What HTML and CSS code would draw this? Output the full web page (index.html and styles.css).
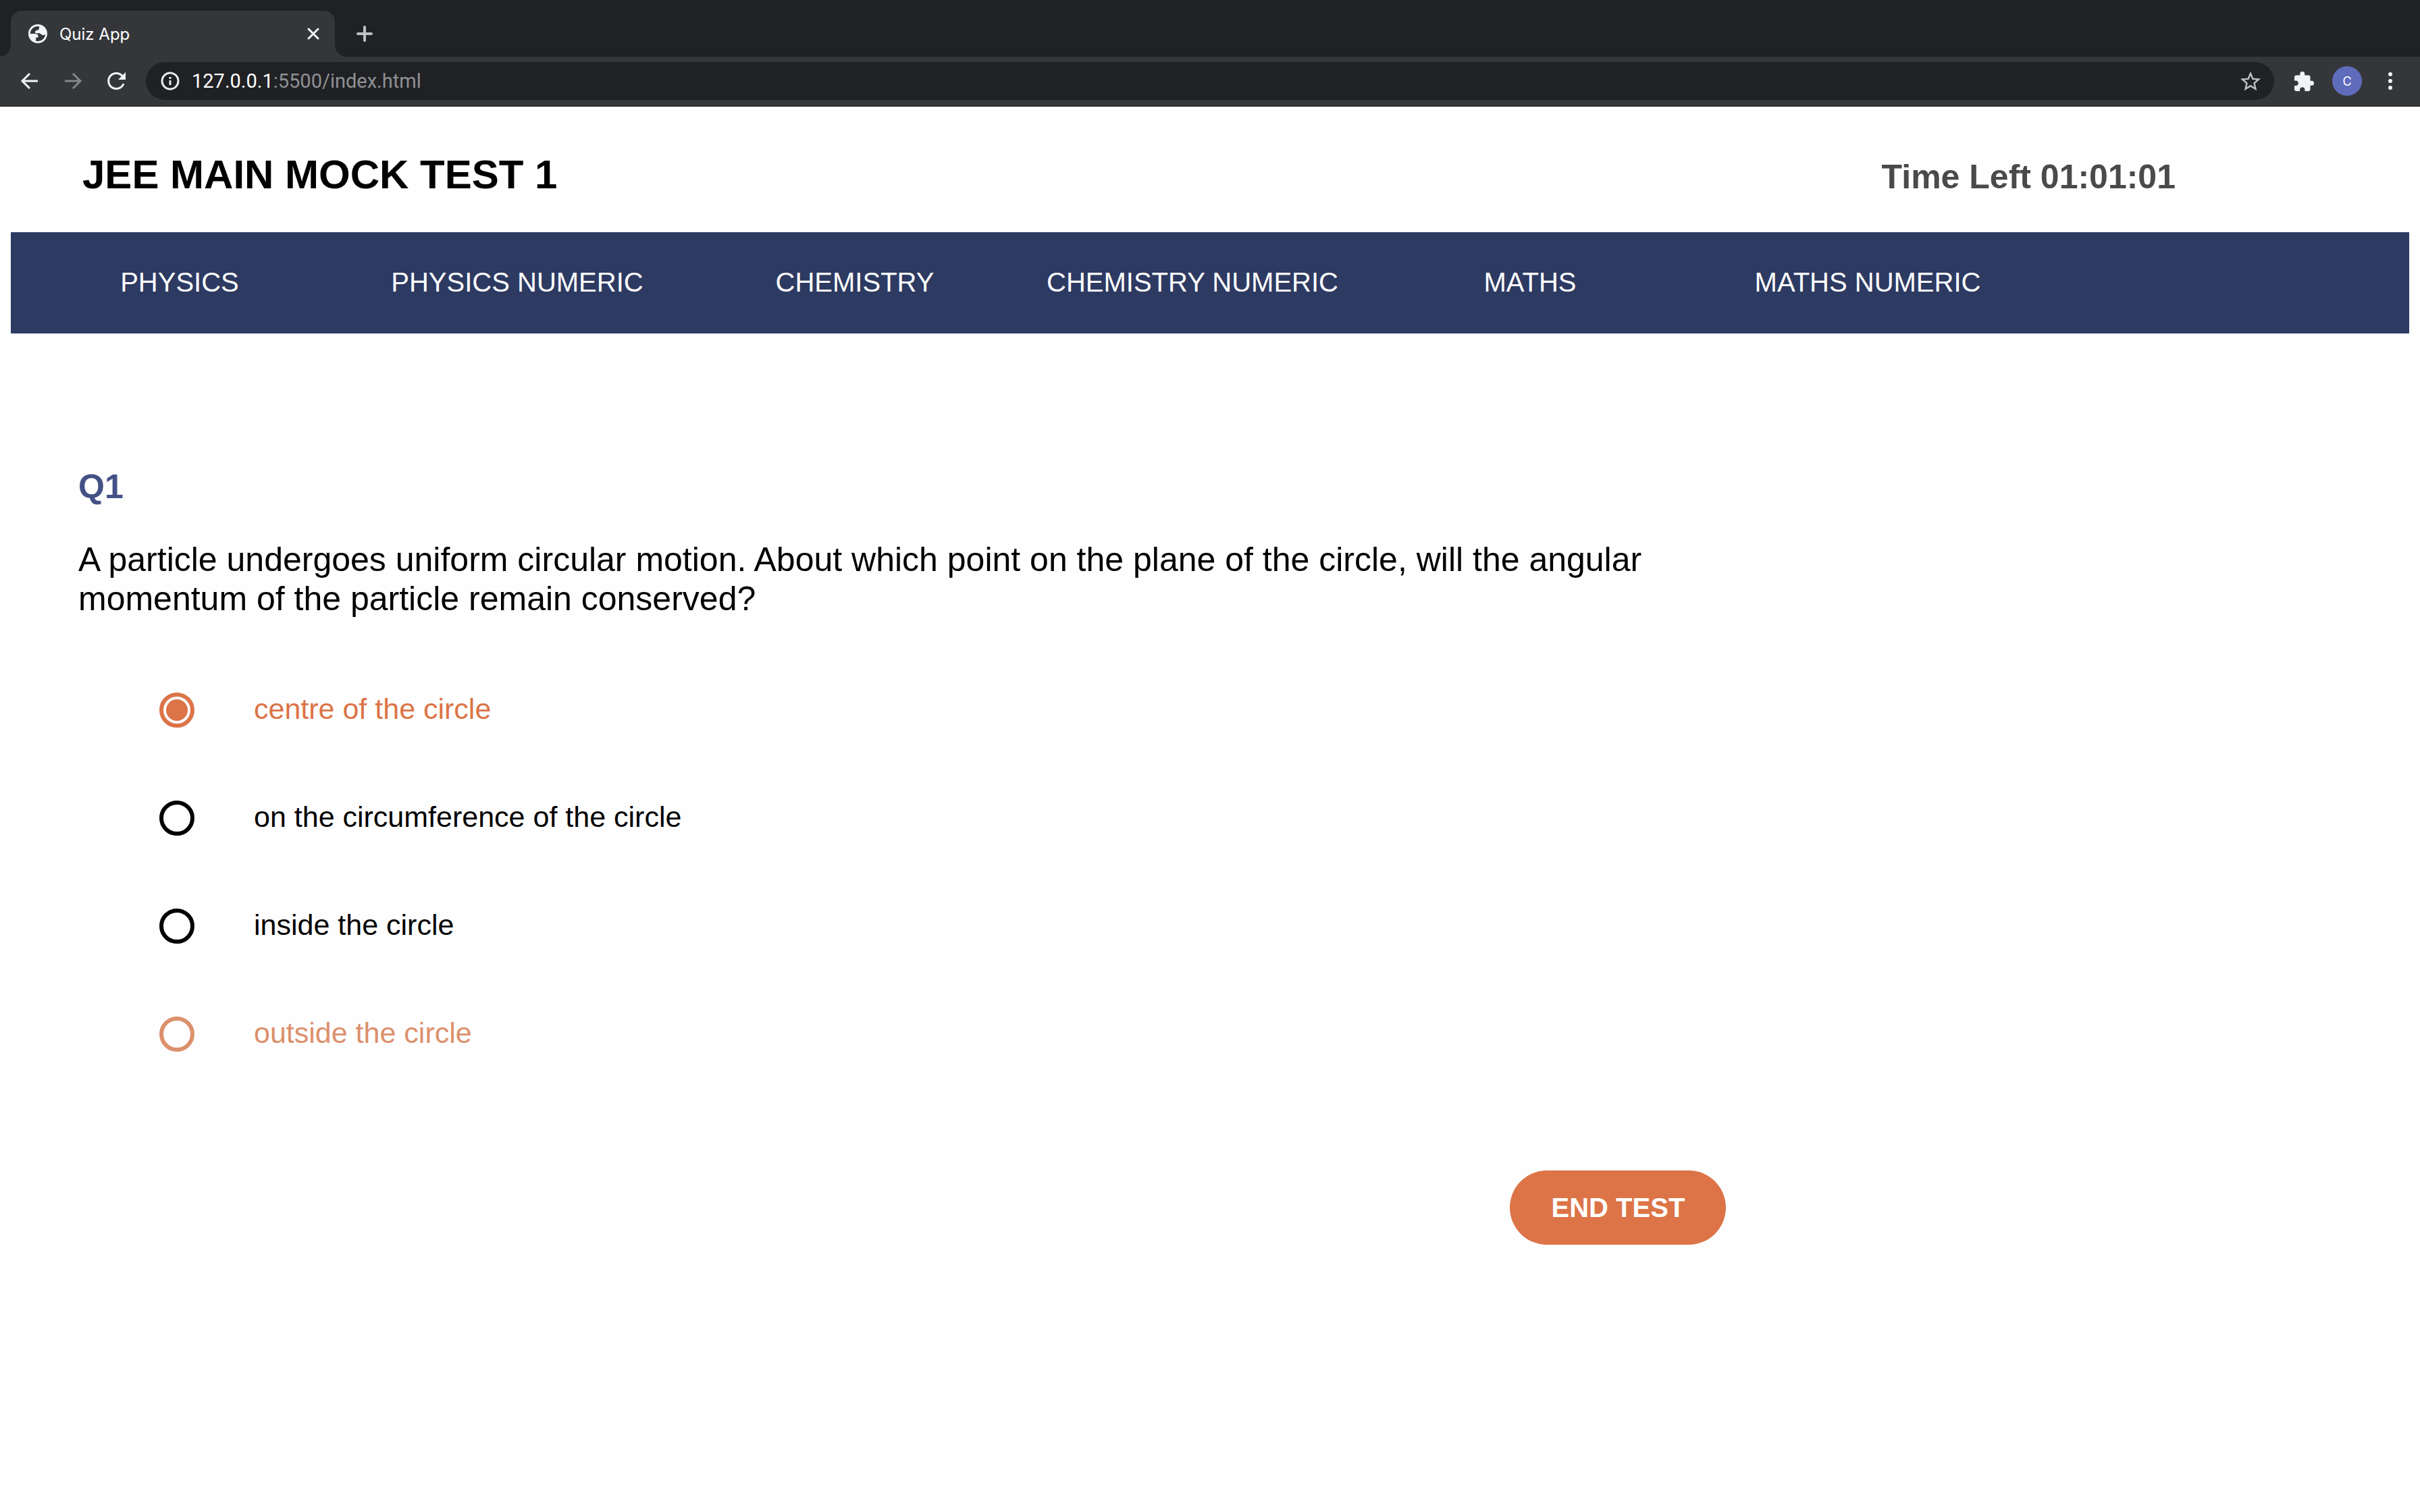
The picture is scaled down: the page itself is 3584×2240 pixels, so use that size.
FILE: index.html
```html
<!DOCTYPE html>
<html lang="en">
<head>
<meta charset="utf-8">
<title>Quiz App</title>
<link rel="stylesheet" href="styles.css">
</head>
<body>
<div class="browser">
  <div class="tab-strip">
    <div class="tab">
      <svg class="tab-icon" viewBox="2 2 20 20" aria-hidden="true"><circle cx="12" cy="12" r="10" fill="#f1f3f4"/><path fill="#35363a" d="M13.500 4.300C8.500 3.500 4 7 4 12h5c2.300 0 3.500 1 3.500 2.800 0 .8-.3 1.200-1 1.200H10v3.700c5 1 9.500-2.200 10-7-.8.8-2.600 1-3.600.6-1.200-.5-1.400-1.600-2.400-1.800H9.500c-.8-1.500 0-3 1.800-3.200 1.500-.2 2.200-1.200 2.200-4z"/></svg>
      <span class="tab-title">Quiz App</span>
      <button class="icon-button" aria-label="Close tab"><svg class="icon-close" viewBox="0 0 18 18"><path d="M2 2l14 14M16 2L2 16"/></svg></button>
    </div>
    <button class="icon-button new-tab" aria-label="New tab"><svg class="icon-plus" viewBox="0 0 24 24"><path d="M12 2v20M2 12h20"/></svg></button>
  </div>
  <div class="toolbar">
    <button class="icon-button" aria-label="Back"><svg class="icon-nav" viewBox="0 0 32 32"><path d="M28 16H6M16 5L5 16l11 11"/></svg></button>
    <button class="icon-button is-disabled" aria-label="Forward" disabled><svg class="icon-nav" viewBox="0 0 32 32"><path d="M4 16h22M16 5l11 11-11 11"/></svg></button>
    <button class="icon-button" aria-label="Reload"><svg class="icon-nav" viewBox="0 0 32 32"><path d="M27 20A11.500 11.500 0 1 1 25 8.500"/><path class="solid" d="M30 3v11H19z"/></svg></button>
    <div class="address-bar">
      <svg class="icon-info" viewBox="0 0 28 28" aria-hidden="true"><circle cx="14" cy="14" r="12"/><path d="M14 13v7M14 8v3"/></svg>
      <div class="address" role="textbox" aria-label="Address" contenteditable="true" spellcheck="false">127.0.0.1<span class="address-path">:5500/index.html</span></div>
      <button class="icon-button" aria-label="Bookmark this tab"><svg class="icon-star" viewBox="2 2 20 19"><path d="M22 9.240l-7.190-.62L12 2 9.190 8.630 2 9.240l5.460 4.730L5.820 21 12 17.270 18.180 21l-1.630-7.030L22 9.240zM12 15.400l-3.760 2.270 1-4.280-3.320-2.880 4.380-.38L12 6.100l1.710 4.040 4.380.38-3.320 2.880 1 4.280L12 15.400z"/></svg></button>
    </div>
    <button class="icon-button" aria-label="Extensions"><svg class="icon-puzzle" viewBox="2 1 21 21"><path d="M20.500 11H19V7c0-1.100-.9-2-2-2h-4V3.500a2.500 2.500 0 0 0-5 0V5H4c-1.100 0-1.990.9-1.990 2v3.800H3.500c1.490 0 2.700 1.210 2.700 2.700s-1.210 2.700-2.700 2.700H2V20c0 1.100.9 2 2 2h3.800v-1.500c0-1.490 1.210-2.700 2.700-2.700s2.700 1.210 2.700 2.700V22H17c1.100 0 2-.9 2-2v-4h1.500a2.500 2.500 0 0 0 0-5z"/></svg></button>
    <button class="avatar" aria-label="Profile">C</button>
    <button class="icon-button" aria-label="Menu"><svg class="icon-menu" viewBox="0 0 6 26"><circle cx="3" cy="3" r="3"/><circle cx="3" cy="13" r="3"/><circle cx="3" cy="23" r="3"/></svg></button>
  </div>
</div>

<div class="page">
  <header class="header">
    <h1 class="title">JEE MAIN MOCK TEST 1</h1>
    <p class="timer">Time Left 01:01:01</p>
  </header>
  <nav class="subjects">
    <a class="subject" href="#physics">PHYSICS</a>
    <a class="subject" href="#physics-numeric">PHYSICS NUMERIC</a>
    <a class="subject" href="#chemistry">CHEMISTRY</a>
    <a class="subject" href="#chemistry-numeric">CHEMISTRY NUMERIC</a>
    <a class="subject" href="#maths">MATHS</a>
    <a class="subject" href="#maths-numeric">MATHS NUMERIC</a>
  </nav>
  <main class="quiz">
    <h2 class="number">Q1</h2>
    <p class="question" id="question">A particle undergoes uniform circular motion. About which point on the plane of the circle, will the angular momentum of the particle remain conserved?</p>
    <div class="options" role="radiogroup" aria-labelledby="question">
      <label class="option"><input class="radio" type="radio" name="answer" checked><span>centre of the circle</span></label>
      <label class="option"><input class="radio" type="radio" name="answer"><span>on the circumference of the circle</span></label>
      <label class="option"><input class="radio" type="radio" name="answer"><span>inside the circle</span></label>
      <label class="option is-hovered"><input class="radio" type="radio" name="answer"><span>outside the circle</span></label>
    </div>
    <div class="actions">
      <button class="end-test">END TEST</button>
    </div>
  </main>
</div>
</body>
</html>
```

FILE: styles.css
```css
* { box-sizing: border-box; }

body {
  margin: 0;
  background: #fefefe;
  color: #000;
  font-family: "Liberation Sans", Arial, Helvetica, sans-serif;
}

h1, h2, p { margin: 0; }

button {
  border: 0;
  padding: 0;
  background: none;
  font-family: inherit;
}

svg { display: block; }

/* Browser window frame */
.browser {
  background: #35363a;
  border-bottom: 2px solid #27282b;
  color: #fff;
  font-family: Inter, Roboto, sans-serif;
}

.tab-strip {
  display: flex;
  height: 84px;
  padding: 16px 16px 0;
  background: #202124;
}

.tab {
  position: relative;
  display: flex;
  align-items: center;
  gap: 18px;
  width: 480px;
  padding: 0 23px 0 26px;
  border-radius: 16px 16px 0 0;
  background: #35363a;
}

/* Flared feet of the active tab */
.tab::before,
.tab::after {
  content: "";
  position: absolute;
  bottom: 0;
  width: 16px;
  height: 16px;
}

.tab::before {
  right: 100%;
  background: radial-gradient(circle at 0 0, #202124 15px, #35363a 16px);
}

.tab::after {
  left: 100%;
  background: radial-gradient(circle at 100% 0, #202124 15px, #35363a 16px);
}

.tab-icon { width: 28px; height: 28px; }

.tab-title {
  flex: 1;
  font-size: 24px;
}

.icon-button {
  display: flex;
  color: #f1f3f4;
  fill: none;
  stroke: currentColor;
  stroke-width: 3;
}

.icon-button.is-disabled { color: #85868a; }

.icon-close { width: 18px; height: 18px; stroke-linecap: round; }

.new-tab {
  align-items: center;
  margin-left: 32px;
  color: #bdc1c6;
  stroke-width: 4;
}

.icon-plus { width: 24px; height: 24px; stroke-linecap: round; }

.toolbar {
  display: flex;
  align-items: center;
  gap: 32px;
  height: 72px;
  padding: 0 41px 0 28px;
}

.icon-nav { width: 32px; height: 32px; }

.solid { fill: currentColor; stroke: none; }

.address-bar {
  flex: 1;
  display: flex;
  align-items: center;
  gap: 18px;
  height: 56px;
  margin-right: -2px;
  margin-left: -4px;
  padding: 0 20px 0 22px;
  border-radius: 28px;
  background: #202124;
}

.address-bar .icon-button { color: #bdc1c6; }

.icon-info {
  width: 28px;
  height: 28px;
  fill: none;
  stroke: #e8eaed;
  stroke-width: 3;
}

.address {
  flex: 1;
  font-family: Roboto, sans-serif;
  font-size: 29px;
}

.address-path { color: #8f9194; }

.icon-star { width: 30px; height: 30px; fill: currentColor; stroke: none; }

.icon-puzzle { width: 29px; height: 29px; fill: currentColor; stroke: none; }

.avatar {
  width: 44px;
  height: 44px;
  margin: 0 7px 0 -5px;
  border-radius: 50%;
  background: #5f6cbb;
  color: #fff;
  font-size: 18px;
}

.icon-menu { width: 6px; height: 26px; fill: currentColor; stroke: none; }

/* Quiz page */
.page { padding: 0 16px; }

.header {
  display: flex;
  align-items: baseline;
  justify-content: space-between;
  height: 186px;
  padding: 66px 346px 0 106px;
}

.title { font-size: 60px; line-height: 70px; }

.timer {
  color: #4a4a4a;
  font-size: 50px;
  font-weight: bold;
}

.subjects {
  display: flex;
  align-items: center;
  height: 150px;
  padding-bottom: 2px;
  background: #2d3a62;
}

.subject {
  width: 500px;
  color: #fff;
  font-size: 40px;
  text-align: center;
  text-decoration: none;
}

.quiz {
  width: 72%;
  padding: 198px 17px 80px 100px;
}

.number {
  color: #445185;
  font-size: 50px;
  line-height: 58px;
}

.question {
  margin-top: 50px;
  font-size: 50px;
  line-height: 58px;
}

.options {
  display: grid;
  gap: 108px;
  margin-top: 110px;
  padding-left: 120px;
}

.option {
  display: flex;
  align-items: flex-start;
  gap: 88px;
  font-size: 43px;
  line-height: 48px;
}

.option:has(:checked) { color: #dc7447; }

.option.is-hovered { color: #dc906c; }

.radio {
  appearance: none;
  width: 52px;
  height: 52px;
  margin: 0;
  border: 6px solid currentColor;
  border-radius: 50%;
  color: inherit;
}

.radio:checked {
  padding: 4px;
  background: currentColor content-box;
}

.actions {
  display: flex;
  justify-content: flex-end;
  margin-top: 176px;
}

.end-test {
  width: 320px;
  height: 110px;
  border-radius: 55px;
  background: #dc7447;
  color: #fff;
  font-size: 40px;
  font-weight: bold;
}
```
